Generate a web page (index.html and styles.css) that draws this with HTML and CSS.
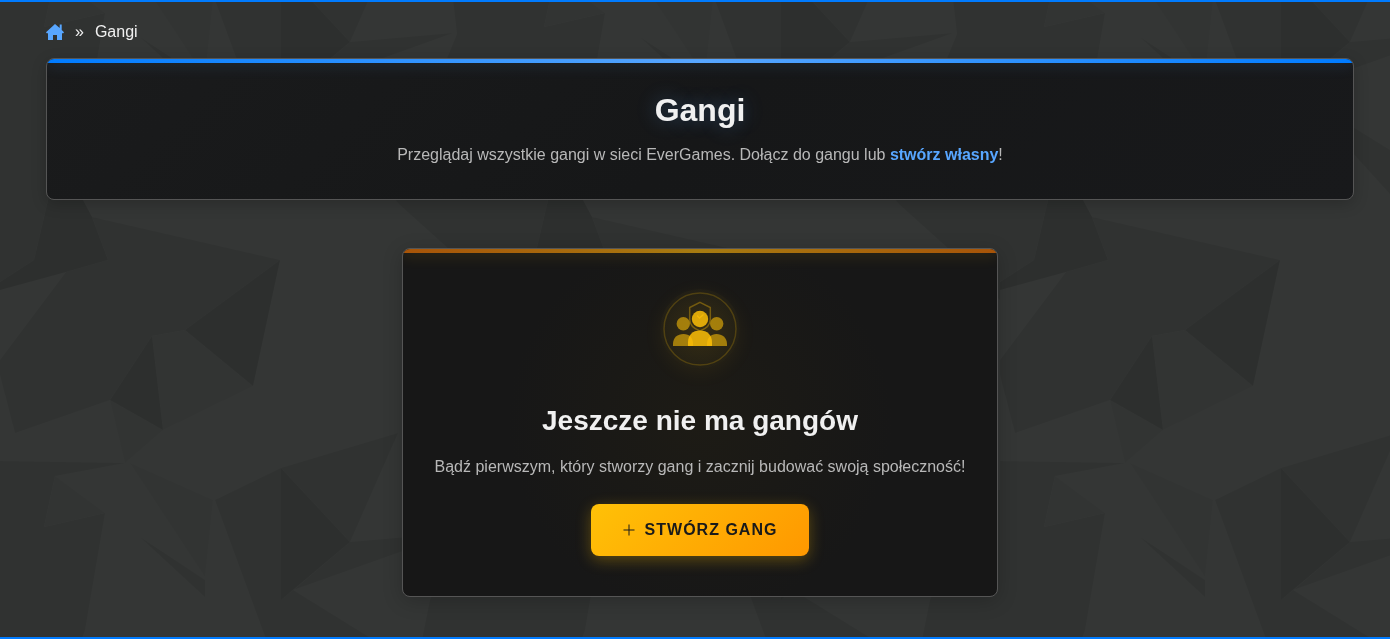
FILE: index.html
```
<!DOCTYPE html>
<html lang="pl">
<head>
  <meta charset="UTF-8">
  <meta name="viewport" content="width=device-width, initial-scale=1.0">
  <title>Gangi</title>
  <link rel="stylesheet" href="styles.css">
</head>
<body>
  <svg class="page-bg" aria-hidden="true">
    <defs>
      <pattern id="poly" x="0" y="150" width="500" height="500" patternUnits="userSpaceOnUse" viewBox="0 150 500 500">
        <rect y="150" width="500" height="500" fill="#343635"/>
        <g fill="#303231">
          <polygon points="0,150 52,150 48,200 34,260 0,282"/>
          <polygon points="350,150 400,205 450,250 500,300 500,150"/>
          <polygon points="92,217 280,260 185,330 152,336 110,400 15,433 0,375 0,360 66,272 108,260"/>
          <polygon points="0,461 125,463 55,476 44,527 105,513 85,630 78,650 0,650"/>
          <polygon points="215,500 281,468 281,650 270,650"/>
          <polygon points="281,468 398,433 350,542"/>
          <polygon points="350,542 453,533 400,552 293,590 281,600 270,610"/>
          <polygon points="281,600 293,590 390,650 270,650"/>
          <polygon points="452,490 457,534 430,600 420,650 500,650 500,490"/>
        </g>
        <g fill="#323433">
          <polygon points="110,400 163,430 125,463"/>
          <polygon points="152,336 185,330 253,386 163,430"/>
          <polygon points="130,463 213,500 205,577"/>
          <polygon points="55,476 105,513 44,527"/>
        </g>
        <g fill="#2d2f2e">
          <polygon points="52,150 70,150 83,200 92,217 108,260 66,272 0,290 0,282 34,260 48,200"/>
          <polygon points="280,260 185,330 253,386"/>
          <polygon points="152,336 110,400 163,430"/>
          <polygon points="281,468 350,542 281,600"/>
        </g>
        <polygon points="140,537 205,580 205,597" fill="#303231"/>
      </pattern>
    </defs>
    <rect width="100%" height="100%" fill="url(#poly)"/>
  </svg>

  <div class="container">
    <nav class="breadcrumb" aria-label="Nawigacja">
      <a class="breadcrumb-home" href="#" aria-label="Strona główna">
        <svg width="18" height="16" viewBox="0 0 18 16" fill="currentColor">
          <path d="M9 0L0 8.300l.7 1H2V16h5v-5h4v5h5V9.300h1.300l.7-1-2.300-2.200V.5h-2v3.600z"/>
        </svg>
      </a>
      <span>»</span>
      <span>Gangi</span>
    </nav>

    <header class="page-header">
      <h1>Gangi</h1>
      <p>Przeglądaj wszystkie gangi w sieci EverGames. Dołącz do gangu lub <a href="#">stwórz własny</a>!</p>
    </header>

    <section class="empty-card">
      <svg class="empty-icon" width="80" height="80" viewBox="0 0 80 80" fill="#ffc107">
        <circle cx="40" cy="40" r="36" fill="none" stroke="#ffc107" stroke-opacity=".2" stroke-width="1.5"/>
        <path d="M40 13.300l10.300 5.200v12c0 5-4.500 9.300-10.300 11.500-5.800-2.200-10.300-6.500-10.300-11.500v-12z" fill="none" stroke="#ffc107" stroke-opacity=".35" stroke-width="1.5"/>
        <g opacity=".57">
          <circle cx="23.300" cy="34.700" r="6.700"/>
          <path d="M13 57v-2c0-6.500 4.500-10 10.500-10S33 48.500 33 55v2z"/>
          <circle cx="56.700" cy="34.700" r="6.700"/>
          <path d="M47 57v-2c0-6.500 4-10 9.500-10S67 48.500 67 55v2z"/>
        </g>
        <circle cx="40" cy="30" r="8.200" opacity=".84"/>
        <path d="M28 57v-3.500C28 46 32.500 41.500 40 41.500S52 46 52 53.500V57z" opacity=".84"/>
        <path d="M37 26.500l2.500 2.500 4-3.500" fill="none" stroke="#ffc107" stroke-opacity=".6" stroke-width="1.500"/>
      </svg>
      <h2>Jeszcze nie ma gangów</h2>
      <p>Bądź pierwszym, który stworzy gang i zacznij budować swoją społeczność!</p>
      <button class="btn-create" type="button">
        <svg width="12" height="12" viewBox="0 0 12 12" fill="none" stroke="currentColor">
          <path d="M6 .5v11M.5 6h11"/>
        </svg>
        Stwórz gang
      </button>
    </section>
  </div>
</body>
</html>
```

FILE: styles.css
```
* {
  box-sizing: border-box;
}
body {
  margin: 0;
  min-height: 100vh;
  font-family: "Liberation Sans", Arial, sans-serif;
  font-size: 16px;
  line-height: 24px;
  background-color: #343635;
  color: #f0f0f0;
  border-top: 2px solid #007bff;
  border-bottom: 2px solid #007bff;
}
.page-bg {
  position: fixed;
  top: 0;
  left: 0;
  z-index: -1;
  width: 100%;
  height: 100%;
}
h1, h2, p {
  margin: 0;
}
a {
  color: #58a6ff;
  text-decoration: none;
}
.container {
  padding: 18px 36px 40px 46px;
}

/* breadcrumb */
.breadcrumb {
  display: flex;
  align-items: center;
  gap: 11px;
  margin-bottom: 14px;
}
.breadcrumb-home {
  display: flex;
}

/* page header */
.page-header,
.empty-card {
  position: relative;
  overflow: hidden;
  border: 1px solid #555;
  border-radius: 8px;
  text-align: center;
}
.page-header {
  padding: 32px;
  background: linear-gradient(135deg, #1a1b1c, #161718 50%, #18191b);
  box-shadow: 0 4px 15px rgba(0, 0, 0, 0.2);
}
.page-header::before,
.empty-card::before {
  content: "";
  position: absolute;
  top: 0;
  left: 0;
  right: 0;
  height: 4px;
}
.page-header::before {
  background: linear-gradient(90deg, #007bff, #58a6ff, #007bff);
  box-shadow: 0 0 15px rgba(88, 166, 255, 0.3);
}
.page-header h1 {
  margin-bottom: 14px;
  font-size: 32px;
  line-height: 38px;
  text-shadow: 0 0 20px rgba(88, 166, 255, 0.3);
}
.page-header p,
.empty-card p {
  color: #b8b8b8;
}
.page-header a {
  font-weight: bold;
}

/* empty state */
.empty-card {
  width: fit-content;
  margin: 48px auto 0;
  padding: 40px 32px;
  background: radial-gradient(circle at 50% 50%, #1d1b15, #171717 192px);
  box-shadow: 0 4px 20px rgba(0, 0, 0, 0.2);
}
.empty-card::before {
  background: linear-gradient(90deg, #a85408, #a87c10, #a85408);
  box-shadow: 0 0 15px rgba(255, 193, 7, 0.3);
}
.empty-icon {
  display: block;
  margin: 0 auto 34px;
  border-radius: 50%;
  background: radial-gradient(circle, rgba(255, 193, 7, 0.12), rgba(255, 193, 7, 0.04) 40px);
  box-shadow: 0 4px 20px rgba(255, 193, 7, 0.06);
}
.empty-card h2 {
  margin-bottom: 16px;
  font-size: 28px;
  line-height: 36px;
}
.btn-create {
  display: inline-flex;
  align-items: center;
  gap: 10px;
  height: 52px;
  margin-top: 25px;
  padding: 0 32px;
  border: none;
  border-radius: 8px;
  background: linear-gradient(135deg, #ffc107, #ff9800);
  box-shadow: 0 4px 15px rgba(255, 193, 7, 0.3);
  color: #1a1a1a;
  font-family: inherit;
  font-size: 16px;
  font-weight: bold;
  letter-spacing: 1px;
  text-transform: uppercase;
  cursor: pointer;
}
```
